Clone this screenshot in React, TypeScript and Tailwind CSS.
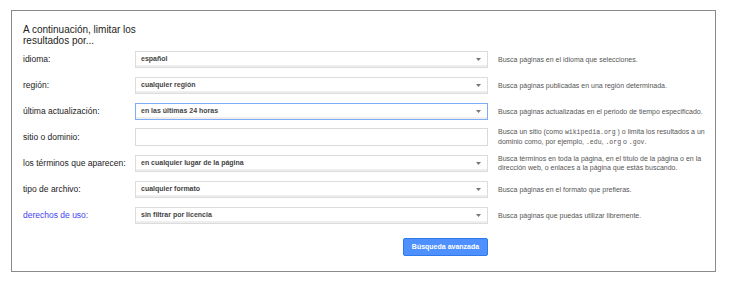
import React from 'react';

type Row = {
  label: string;
  value?: string;
  focused?: boolean;
  link?: boolean;
  desc: React.ReactNode;
};

const Mono: React.FC<{ children: React.ReactNode }> = ({ children }) => (
  <span className="font-['Liberation_Mono',monospace] text-[6.5px]">{children}</span>
);

const rows: Row[] = [
  { label: 'idioma:', value: 'español', desc: 'Busca páginas en el idioma que selecciones.' },
  { label: 'región:', value: 'cualquier región', desc: 'Busca páginas publicadas en una región determinada.' },
  {
    label: 'última actualización:',
    value: 'en las últimas 24 horas',
    focused: true,
    desc: 'Busca páginas actualizadas en el periodo de tiempo especificado.',
  },
  {
    label: 'sitio o dominio:',
    desc: (
      <>
        Busca un sitio (como <Mono>wikipedia.org</Mono> ) o limita los resultados a un dominio como, por ejemplo,{' '}
        <Mono>.edu</Mono>, <Mono>.org</Mono> o <Mono>.gov</Mono>.
      </>
    ),
  },
  {
    label: 'los términos que aparecen:',
    value: 'en cualquier lugar de la página',
    desc: 'Busca términos en toda la página, en el título de la página o en la dirección web, o enlaces a la página que estás buscando.',
  },
  { label: 'tipo de archivo:', value: 'cualquier formato', desc: 'Busca páginas en el formato que prefieras.' },
  {
    label: 'derechos de uso:',
    value: 'sin filtrar por licencia',
    link: true,
    desc: 'Busca páginas que puedas utilizar libremente.',
  },
];

const Select: React.FC<{ value: string; focused?: boolean }> = ({ value, focused }) => (
  <div
    className={`h-[17px] w-[353px] flex items-center justify-between pl-[5px] pr-[5px] bg-white shadow-[inset_0_-2px_0_#eeeeee] ${
      focused ? 'border border-[#7eaaf6]' : 'border border-[#dcdcdc]'
    }`}
  >
    <span className="text-[7px] font-bold text-[#444]">{value}</span>
    <svg width="5" height="3" viewBox="0 0 5 3" className="mr-[1px]">
      <path d="M0 0h5L2.5 3z" fill="#777" />
    </svg>
  </div>
);

export default function App() {
  return (
    <div className="w-[730px] h-[281px] bg-white pt-[10px] pl-[11px] font-['Liberation_Sans',Arial,sans-serif]">
      <div className="w-[705px] h-[262px] border border-[#8a8a8a] pl-[11px] pt-[13px] flex flex-col">
        <h2 className="w-[115px] text-[10px] leading-[11px] text-[#222]">
          A continuación, limitar los resultados por...
        </h2>

        <div className="flex flex-col">
          {rows.map((r) => (
            <div key={r.label} className="h-[26px] flex items-center">
              <div
                className={`w-[112px] text-[8.5px] ${r.link ? 'text-[#4343f2]' : 'text-[#222]'}`}
              >
                {r.label}
              </div>
              {r.value ? (
                <Select value={r.value} focused={r.focused} />
              ) : (
                <div className="h-[18px] w-[353px] bg-white border border-[#d9d9d9]" />
              )}
              <div className="ml-[10px] w-[214px] text-[7px] leading-[9px] text-[#555]">{r.desc}</div>
            </div>
          ))}
        </div>

        <div className="w-[465px] flex justify-end mt-[10px]">
          <button className="h-[18px] w-[85px] rounded-[2px] bg-[#4d90fe] border border-[#3079ed] text-white text-[7px] font-bold">
            Búsqueda avanzada
          </button>
        </div>
      </div>
    </div>
  );
}
